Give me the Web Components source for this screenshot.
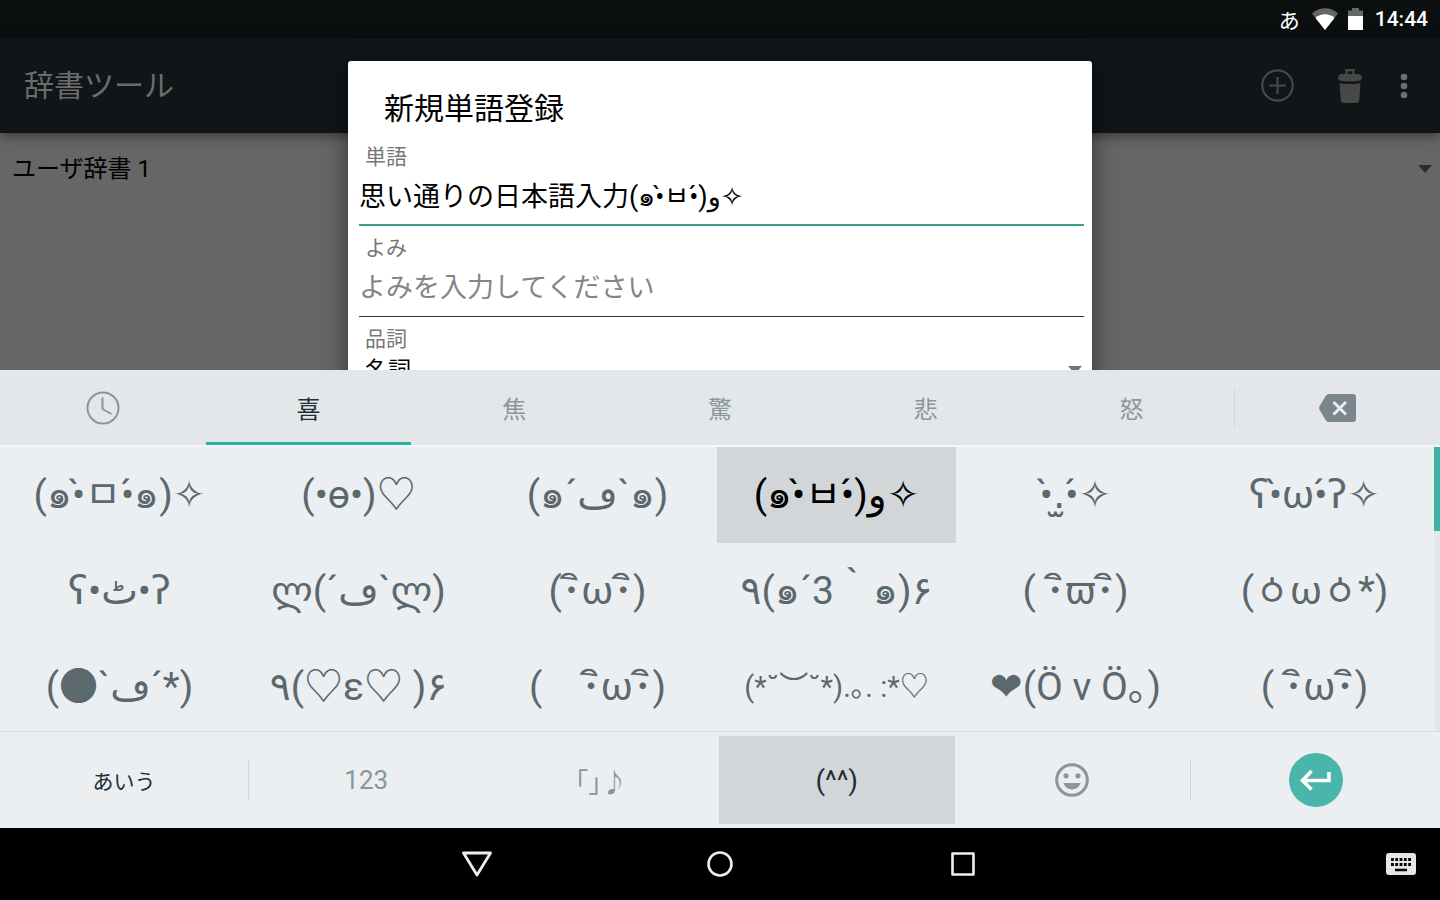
<!DOCTYPE html>
<html lang="ja">
<head>
  <meta charset="utf-8">
  <meta name="viewport" content="width=device-width, initial-scale=1">
  <title>辞書ツール</title>
  <style>
    body {
      margin: 0;
      height: 100vh;
      display: flex;
      flex-direction: column;
      overflow: hidden;
      font-family: Roboto, "Noto Sans CJK JP", "DejaVu Sans", sans-serif;
      background: #000;
    }
  </style>
</head>
<body>
  <app-screen>
    <status-bar slot="status"></status-bar>
    <app-bar slot="bar">辞書ツール</app-bar>
    <drop-down class="wide" label="辞書" value="ユーザ辞書 1"></drop-down>
    <word-dialog slot="dialog" heading="新規単語登録">
      <text-field label="単語" value="思い通りの日本語入力(๑•̀ㅂ•́)و✧" active></text-field>
      <text-field label="よみ" placeholder="よみを入力してください"></text-field>
      <drop-down label="品詞" value="名詞" labelled></drop-down>
    </word-dialog>
  </app-screen>

  <kaomoji-keyboard>
    <tab-key slot="tabs" label="履歴">
      <svg width="34" height="34" viewBox="0 0 34 34" fill="none" stroke="#8b969a" stroke-width="2"><circle cx="17" cy="17" r="15.5"/><path d="M16.5 6.5V18l9 5"/></svg>
    </tab-key>
    <tab-key slot="tabs" selected>喜</tab-key>
    <tab-key slot="tabs">焦</tab-key>
    <tab-key slot="tabs">驚</tab-key>
    <tab-key slot="tabs">悲</tab-key>
    <tab-key slot="tabs">怒</tab-key>
    <tab-key slot="tabs" label="削除" divided>
      <svg width="37" height="28" viewBox="0 0 37 28"><path d="M10 0h24a3 3 0 0 1 3 3v22a3 3 0 0 1-3 3H10Q8 28 7 26.500L.6 16Q-.3 14 .6 12L7 1.500Q8 0 10 0z" fill="#7b858c"/><path d="m14.500 8 12.500 12.500M27 8 14.500 20.500" stroke="#e8ecef" stroke-width="3"/></svg>
    </tab-key>

    <kao-key>(๑•̀ㅁ•́๑)✧</kao-key>
    <kao-key>(•ө•)♡</kao-key>
    <kao-key>(๑´ڡ`๑)</kao-key>
    <kao-key pressed>(๑•̀ㅂ•́)و✧</kao-key>
    <kao-key>•̀.̫•́✧</kao-key>
    <kao-key>ʕ•̀ω•́ʔ✧</kao-key>
    <kao-key>ʕ•ٹ•ʔ</kao-key>
    <kao-key>ლ(´ڡ`ლ)</kao-key>
    <kao-key>(･ิω･ิ)</kao-key>
    <kao-key>٩(๑´3｀๑)۶</kao-key>
    <kao-key>( ･ิϖ･ิ)</kao-key>
    <kao-key>(ㆁωㆁ*)</kao-key>
    <kao-key>(●`ڡ´*)</kao-key>
    <kao-key>٩(♡ε♡ )۶</kao-key>
    <kao-key>(　･ิω･ิ)</kao-key>
    <kao-key small>(*˘︶˘*).｡. :*♡</kao-key>
    <kao-key>❤(Ö v Ö｡)</kao-key>
    <kao-key>( ･ิω･ิ)</kao-key>

    <mode-key slot="modes" class="kana">あいう</mode-key>
    <mode-key slot="modes" class="dim" divided>123</mode-key>
    <mode-key slot="modes" class="dim">｢｣♪</mode-key>
    <mode-key slot="modes" pressed>(^^)</mode-key>
    <mode-key slot="modes" label="絵文字">
      <svg width="34" height="34" viewBox="0 0 34 34" fill="#8b9699"><circle cx="17" cy="17" r="15.300" fill="none" stroke="#8b9699" stroke-width="3"/><circle cx="11" cy="12.800" r="2.600"/><circle cx="23" cy="12.800" r="2.600"/><path d="M8.500 20h17c-1.300 4-4.600 6.300-8.500 6.300S9.800 24 8.500 20z"/></svg>
    </mode-key>
    <mode-key slot="modes" label="確定" divided>
      <svg width="54" height="54" viewBox="0 0 54 54" fill="none" stroke="#fff" stroke-width="3.600"><circle cx="27" cy="27" r="27" fill="#4ab5aa" stroke="none"/><path d="M40 19v8.500H15M22.500 18 13.500 27.500l9 9"/></svg>
    </mode-key>
  </kaomoji-keyboard>

  <nav-bar></nav-bar>

  <script>
    class BaseElement extends HTMLElement {
      constructor() {
        super();
        this.shadowDOM = this.attachShadow({mode: 'open'});
      }

      connectedCallback() {
        this.shadowDOM.innerHTML = `
          <style>
            * { box-sizing: border-box; }
            :host { display: block; box-sizing: border-box; }
            svg { display: block; }
            button {
              margin: 0;
              padding: 0;
              border: 0;
              background: none;
              color: inherit;
              font: inherit;
            }
          </style>
          ${this.render()}
        `;
      }

      attr(name) {
        return this.getAttribute(name) || '';
      }

      get aria() {
        return this.attr('label') ? `aria-label="${this.attr('label')}"` : '';
      }
    }

    class AppScreen extends BaseElement {
      render() {
        return `
          <style>
            :host {
              position: relative;
              flex: 1;
              min-height: 0;
              overflow: hidden;
              background: #666;
            }
            .overlay {
              position: absolute;
              inset: 0;
              display: flex;
              justify-content: center;
              align-items: flex-start;
              padding-top: 61px;
            }
          </style>
          <slot name="status"></slot>
          <slot name="bar"></slot>
          <slot></slot>
          <div class="overlay"><slot name="dialog"></slot></div>
        `;
      }
    }

    class StatusBar extends BaseElement {
      render() {
        return `
          <style>
            :host {
              display: flex;
              align-items: center;
              justify-content: flex-end;
              gap: 12px;
              height: 38px;
              padding: 0 12px;
              background: #0b0f10;
              color: #fff;
              font-size: 21px;
            }
            .time { font-weight: 500; }
            .icons { display: flex; gap: 10px; }
          </style>
          <span>あ</span>
          <div class="icons">
            <svg width="26" height="22" viewBox="0 0 26 22"><path d="M13 22 0 5.500C7-1.500 19-1.500 26 5.500z" fill="#666"/><path d="M13 22 3.500 10C8 5 18 5 22.500 10z" fill="#fff"/></svg>
            <svg width="15" height="22" viewBox="0 0 15 22"><path d="M0 8V2.500h4V0h7v2.500h4V8z" fill="#666"/><path d="M0 8h15v14H0z" fill="#fff"/></svg>
          </div>
          <span class="time">14:44</span>
        `;
      }
    }

    class AppBar extends BaseElement {
      render() {
        return `
          <style>
            :host {
              display: flex;
              align-items: center;
              height: 95px;
              padding: 0 32px 0 24px;
              background: #101518;
              box-shadow: 0 2px 12px rgba(0, 0, 0, 0.5);
              color: #6c6c6c;
              font-size: 30px;
            }
            h1 {
              flex: 1;
              margin: 0;
              padding-bottom: 5px;
              font: inherit;
            }
            .add { margin-right: 44px; }
            .trash { margin-right: 38px; }
          </style>
          <h1><slot></slot></h1>
          <button class="add" aria-label="追加">
            <svg width="33" height="33" viewBox="0 0 33 33" fill="none" stroke="#484848" stroke-width="2.200"><circle cx="16.500" cy="16.500" r="15.200"/><path d="M16.500 8v17M8 16.500h17"/></svg>
          </button>
          <button class="trash" aria-label="削除">
            <svg width="24" height="34" viewBox="0 0 24 34" fill="#484848"><path d="M8.500 6V1.200h7V6" fill="none" stroke="#484848" stroke-width="2.200"/><path d="M4 5h16c2.500 0 4 1.700 4 4 0 1.500-1 2.500-3 2.800-5 .9-13 .9-18 0C1 11.500 0 10.500 0 9c0-2.300 1.500-4 4-4z"/><path d="M1.500 14.200c6 1 15 1 21 0L21.300 31c-.2 2-1.500 3-3.500 3H6.200c-2 0-3.300-1-3.500-3z"/></svg>
          </button>
          <button aria-label="メニュー">
            <svg width="8" height="26" viewBox="0 0 8 26" fill="#6e6e6e"><circle cx="4" cy="4" r="3.300"/><circle cx="4" cy="13" r="3.300"/><circle cx="4" cy="22" r="3.300"/></svg>
          </button>
        `;
      }
    }

    class DropDown extends BaseElement {
      render() {
        const label = this.attr('label');
        const labelled = this.hasAttribute('labelled');
        return `
          <style>
            :host(.wide) { padding: 10px 8px 0 12px; }
            :host(.wide) select { height: 52px; font-size: 24px; }
            label {
              display: block;
              padding-left: 6px;
              color: #777;
              font-size: 21px;
              line-height: 26px;
            }
            .box { display: grid; align-items: center; }
            :host(:not(.wide)) .box { padding-left: 6px; }
            select, svg { grid-area: 1 / 1; }
            select {
              appearance: none;
              width: 100%;
              height: 36px;
              margin: 0;
              padding: 0;
              border: 0;
              background: none;
              color: #000;
              font: inherit;
              font-size: 23px;
            }
            svg { justify-self: end; pointer-events: none; }
            :host(:not(.wide)) svg { margin-right: 2px; }
          </style>
          ${labelled ? `<label for="choice">${label}</label>` : ''}
          <div class="box">
            <select id="choice" ${labelled ? '' : this.aria}><option>${this.attr('value')}</option></select>
            <svg width="14" height="8" viewBox="0 0 14 8"><path d="M0 0h14L7 8z" fill="${labelled ? '#757575' : '#2c2c2c'}"/></svg>
          </div>
        `;
      }
    }

    class WordDialog extends BaseElement {
      render() {
        return `
          <style>
            :host {
              width: 744px;
              max-width: 90%;
              height: 600px;
              padding: 0 8px 0 11px;
              border-radius: 3px;
              background: #fff;
              box-shadow: 0 4px 24px rgba(0, 0, 0, 0.5);
            }
            h2 {
              margin: 0;
              padding: 30px 25px 17px;
              font-size: 30px;
              font-weight: 400;
              line-height: 36px;
            }
          </style>
          <h2>${this.attr('heading')}</h2>
          <slot></slot>
        `;
      }
    }

    class TextField extends BaseElement {
      render() {
        return `
          <style>
            :host { margin-bottom: 9px; }
            label {
              display: block;
              padding-left: 6px;
              color: #777;
              font-size: 21px;
              line-height: 26px;
            }
            input {
              display: block;
              width: 100%;
              height: 56px;
              padding: 0 0 2px;
              border: 0;
              border-bottom: 1px solid #333;
              border-radius: 0;
              outline: 0;
              background: none;
              color: #000;
              font: inherit;
              font-size: 27px;
            }
            input::placeholder { color: #858585; }
            :host([active]) input { border-bottom: 2px solid #3d9e90; }
          </style>
          <label for="field">${this.attr('label')}</label>
          <input id="field" type="text" value="${this.attr('value')}" placeholder="${this.attr('placeholder')}">
        `;
      }
    }

    class KaomojiKeyboard extends BaseElement {
      render() {
        return `
          <style>
            :host { background: #ebeff2; color: #5b686d; }
            .tabs {
              display: grid;
              grid-template-columns: repeat(7, 1fr);
              height: 77px;
              background: #e3e7ea;
              border-bottom: 2px solid #f4f6f7;
            }
            .list { display: flex; height: 284px; overflow: hidden; }
            .keys {
              flex: 1;
              display: grid;
              grid-template-columns: repeat(6, minmax(0, 1fr));
              grid-auto-rows: 96px;
            }
            .track { width: 6px; background: #e3e7ea; }
            .thumb { height: 84px; background: #3fb3a8; }
            .modes {
              display: grid;
              grid-template-columns: 248px repeat(4, 1fr) 250px;
              height: 97px;
              padding: 4px 0;
              border-top: 1px solid #d8dde0;
            }
          </style>
          <div class="tabs"><slot name="tabs"></slot></div>
          <div class="list">
            <div class="keys"><slot></slot></div>
            <div class="track"><div class="thumb"></div></div>
          </div>
          <div class="modes"><slot name="modes"></slot></div>
        `;
      }
    }

    class TabKey extends BaseElement {
      render() {
        return `
          <style>
            :host { display: flex; align-items: center; }
            button {
              display: flex;
              align-items: center;
              justify-content: center;
              width: 100%;
              height: 100%;
              color: #8b969a;
              font-size: 24px;
            }
            :host([selected]) button {
              padding-top: 3px;
              border-bottom: 3px solid #2fb0a5;
              color: #1f2f35;
            }
            :host([divided]) button {
              height: 38px;
              border-left: 1px solid #cfd4d7;
            }
          </style>
          <button ${this.aria}><slot></slot></button>
        `;
      }
    }

    class KaoKey extends BaseElement {
      render() {
        return `
          <style>
            button {
              width: 100%;
              height: 100%;
              font-size: 39px;
              line-height: 48px;
              white-space: pre;
            }
            :host([small]) button { font-size: 29px; }
            :host([pressed]) button { background: #d2d6d9; color: #000; }
          </style>
          <button><slot></slot></button>
        `;
      }
    }

    class ModeKey extends BaseElement {
      render() {
        return `
          <style>
            :host { display: flex; align-items: center; }
            button {
              display: flex;
              align-items: center;
              justify-content: center;
              width: 100%;
              height: 100%;
              color: #1f2f35;
              font-size: 28px;
            }
            :host(.kana) button { font-size: 21px; }
            :host(.dim) button { color: #8b9699; font-size: 26px; }
            :host([divided]) button {
              height: 42px;
              border-left: 1px solid #d2d7da;
            }
            :host([pressed]) button { background: #d2d6d9; }
          </style>
          <button ${this.aria}><slot></slot></button>
        `;
      }
    }

    class NavBar extends BaseElement {
      render() {
        return `
          <style>
            :host {
              display: grid;
              grid-template-columns: 1fr auto 1fr;
              align-items: center;
              height: 72px;
              padding: 0 24px;
              background: #000;
            }
            .main { grid-column: 2; display: flex; gap: 213px; }
            .main svg { width: 30px; height: 30px; }
            .ime { justify-self: end; }
          </style>
          <div class="main">
            <button aria-label="戻る"><svg viewBox="0 0 30 30" fill="none" stroke="#eee" stroke-width="2.800" stroke-linejoin="round"><path d="M1.500 4h27L15 26z"/></svg></button>
            <button aria-label="ホーム"><svg viewBox="0 0 30 30" fill="none" stroke="#eee" stroke-width="2.600"><circle cx="15" cy="15" r="11.500"/></svg></button>
            <button aria-label="履歴"><svg viewBox="0 0 30 30" fill="none" stroke="#eee" stroke-width="2.600" stroke-linejoin="round"><path d="M4.500 4.500h21v21h-21z"/></svg></button>
          </div>
          <button class="ime" aria-label="キーボード">
            <svg width="30" height="22" viewBox="0 0 30 22"><rect width="30" height="22" rx="3" fill="#e6e6e6"/><path d="M5 6.500h20M5 11.500h20" stroke="#000" stroke-width="3" stroke-dasharray="2.800 1.500"/><path d="M9 17h12" stroke="#000" stroke-width="2.500"/></svg>
          </button>
        `;
      }
    }

    customElements.define('app-screen', AppScreen);
    customElements.define('status-bar', StatusBar);
    customElements.define('app-bar', AppBar);
    customElements.define('drop-down', DropDown);
    customElements.define('word-dialog', WordDialog);
    customElements.define('text-field', TextField);
    customElements.define('kaomoji-keyboard', KaomojiKeyboard);
    customElements.define('tab-key', TabKey);
    customElements.define('kao-key', KaoKey);
    customElements.define('mode-key', ModeKey);
    customElements.define('nav-bar', NavBar);
  </script>
</body>
</html>
